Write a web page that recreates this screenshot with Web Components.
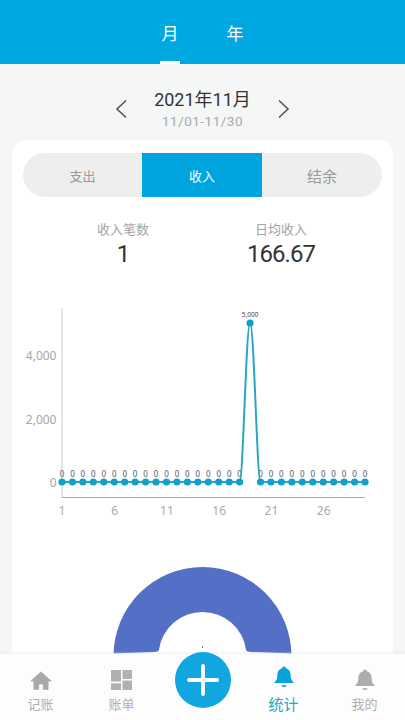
<!DOCTYPE html>
<html lang="zh">
<head>
<meta charset="utf-8">
<title>统计</title>
<style>
html,body{margin:0;padding:0;width:405px;height:720px;overflow:hidden;background:#f5f6f6;}
body{font-family:"Noto Sans CJK SC","Noto Sans",sans-serif;}
</style>
</head>
<body>
<stat-app>
    <app-header></app-header>
    <date-switch month="2021年11月" range="11/01-11/30"></date-switch>
    <stat-card>
        <seg-tabs></seg-tabs>
        <stat-summary></stat-summary>
        <line-chart></line-chart>
        <half-donut></half-donut>
    </stat-card>
    <bottom-nav slot="nav"></bottom-nav>
</stat-app>
<script>
class StatApp extends HTMLElement {
    constructor() {
        super();
        this.attachShadow({ mode: 'open' });
        this.shadowRoot.innerHTML = `
        <style>
            :host{display:flex;flex-direction:column;width:405px;height:720px;overflow:hidden;background:#f5f6f6;}
            .body{flex:1;min-height:0;overflow:hidden;display:flex;flex-direction:column;}
        </style>
        <div class="body"><slot></slot></div>
        <slot name="nav"></slot>
        `;
    }
}
class AppHeader extends HTMLElement {
    constructor() {
        super();
        this.attachShadow({ mode: 'open' });
        this.shadowRoot.innerHTML = `
        <style>
            :host{display:block;flex:none;height:64px;background:#00a8e2;color:#fff;}
            .tabs{display:flex;height:64px;padding-left:160px;gap:45px;box-sizing:border-box;}
            .tab{width:20px;display:flex;justify-content:center;align-items:flex-start;padding-top:21px;box-sizing:border-box;font-size:17px;line-height:24px;}
            .on{border-bottom:3px solid #fff;}
        </style>
        <div class="tabs">
            <div class="tab on">月</div>
            <div class="tab">年</div>
        </div>
        `;
    }
}
class DateSwitch extends HTMLElement {
    constructor() {
        super();
        this.attachShadow({ mode: 'open' });
    }
    connectedCallback() {
        this.shadowRoot.innerHTML = `
        <style>
            :host{display:flex;flex:none;height:76px;justify-content:center;align-items:center;gap:19.500px;}
            .mid{width:110px;text-align:center;padding-top:13px;}
            .m{font-family:Roboto,"Noto Sans CJK SC",sans-serif;font-size:18px;line-height:24px;color:#333;white-space:nowrap;}
            .r{font-family:Roboto,sans-serif;font-size:13.500px;line-height:16px;margin-top:1px;color:#aaa;letter-spacing:.5px;white-space:nowrap;}
            svg{display:block;margin-top:14px;}
        </style>
        <svg width="14" height="20" viewBox="0 0 14 20"><path d="M12 1.500 3 10l9 8.500" fill="none" stroke="#555" stroke-width="1.600"/></svg>
        <div class="mid">
            <div class="m">${this.getAttribute('month')}</div>
            <div class="r">${this.getAttribute('range')}</div>
        </div>
        <svg width="14" height="20" viewBox="0 0 14 20"><path d="M2 1.500 11 10l-9 8.500" fill="none" stroke="#555" stroke-width="1.600"/></svg>
        `;
    }
}
class StatCard extends HTMLElement {
    constructor() {
        super();
        this.attachShadow({ mode: 'open' });
        this.shadowRoot.innerHTML = `
        <style>
            :host{display:block;flex:1;min-height:0;margin:0 12px;padding:13px 11px 0;background:#fff;border-radius:14px 14px 0 0;box-sizing:border-box;overflow:hidden;}
        </style>
        <slot></slot>
        `;
    }
}
class SegTabs extends HTMLElement {
    constructor() {
        super();
        this.attachShadow({ mode: 'open' });
        this.shadowRoot.innerHTML = `
        <style>
            :host{display:grid;grid-template-columns:119px 120px 120px;height:44px;background:#eeeeee;border-radius:22px;overflow:hidden;}
            div{display:flex;align-items:center;justify-content:center;font-size:13px;color:#9a9a9a;}
            .on{background:#00a5df;color:#fff;}
            .big{font-size:15px;}
        </style>
        <div>支出</div>
        <div class="on">收入</div>
        <div class="big">结余</div>
        `;
    }
}
class StatSummary extends HTMLElement {
    constructor() {
        super();
        this.attachShadow({ mode: 'open' });
        this.shadowRoot.innerHTML = `
        <style>
            :host{display:grid;grid-template-columns:200px 116px;padding-top:22px;height:73px;box-sizing:border-box;}
            .c{text-align:center;}
            .l{font-size:13px;line-height:20px;color:#a4a4a4;white-space:nowrap;}
            .v{font-family:Roboto,sans-serif;font-size:24px;line-height:30px;color:#333;letter-spacing:-1px;white-space:nowrap;}
        </style>
        <div class="c"><div class="l">收入笔数</div><div class="v">1</div></div>
        <div class="c"><div class="l">日均收入</div><div class="v">166.67</div></div>
        `;
    }
}
class LineChart extends HTMLElement {
    constructor() {
        super();
        this.attachShadow({ mode: 'open' });
    }
    connectedCallback() {
        // x=0 of the svg is the card's content edge
        const ox = 39, y0 = 195, step = 303 / 29, top = 36;
        const xs = Array.from({ length: 30 }, (_, i) => ox + i * step);
        const peak = 18;
        let dots = '', labels = '', line = '';
        xs.forEach((x, i) => {
            const y = i === peak ? top : y0;
            if (i === peak) {
                labels += `<text x="${x}" y="${top - 6}" font-size="6.500" fill="#444" text-anchor="middle">5,000</text>`;
            } else {
                labels += `<text x="${x}" y="${y0 - 5}" font-size="8" fill="#555" text-anchor="middle">0</text>`;
            }
            dots += `<circle cx="${x}" cy="${y}" r="3.600" fill="#119fcb"/>`;
        });
        const a = xs[peak - 1], b = xs[peak], c = xs[peak + 1];
        line = `M${xs[0]} ${y0}L${a} ${y0}C${a + 3.5} ${y0} ${b - 4} ${top} ${b} ${top}C${b + 4} ${top} ${c - 3.5} ${y0} ${c} ${y0}L${xs[29]} ${y0}`;
        const ticks = [[1, 0], [6, 5], [11, 10], [16, 15], [21, 20], [26, 25]].map(([t, i]) =>
            `<text x="${xs[i] + (i ? 0.5 : 0)}" y="228" font-size="12" fill="#ababab" text-anchor="middle">${t}</text>`).join('');
        this.shadowRoot.innerHTML = `
        <style>
            :host{display:block;height:276px;padding-top:17px;}
            svg{display:block;font-family:"Noto Sans","Noto Sans CJK SC",sans-serif;}
        </style>
        <svg width="359" height="276" viewBox="0 0 359 276">
            <path d="M39 21V211" stroke="#d2d2d2" stroke-width="1.200" fill="none"/>
            <path d="M39 210.500H342" stroke="#a8a8a8" stroke-width="1" fill="none"/>
            <text x="33.500" y="72.500" font-size="12" fill="#a6a6a6" text-anchor="end">4,000</text>
            <text x="33.500" y="136.500" font-size="12" fill="#a6a6a6" text-anchor="end">2,000</text>
            <text x="33.500" y="200" font-size="12" fill="#a6a6a6" text-anchor="end">0</text>
            ${ticks}
            ${labels}
            <path d="${line}" fill="none" stroke="#2ba5c4" stroke-width="2"/>
            ${dots}
        </svg>
        `;
    }
}
class HalfDonut extends HTMLElement {
    constructor() {
        super();
        this.attachShadow({ mode: 'open' });
        this.shadowRoot.innerHTML = `
        <style>
            :host{display:block;height:91px;}
            svg{display:block;}
        </style>
        <svg width="359" height="91" viewBox="0 0 359 91">
            <path d="M90.500 93A89 89 0 0 1 268.500 93V90.500L228 89C224.500 89 223.500 88 223.100 87A44 44 0 0 0 135.900 87C135.500 88 134.500 89 131 89L90.500 90.500Z" fill="#5470c6"/>
            <path d="M179.500 83V85" stroke="#888" stroke-width="1"/>
        </svg>
        `;
    }
}
class BottomNav extends HTMLElement {
    constructor() {
        super();
        this.attachShadow({ mode: 'open' });
        const bell = c => `<svg width="20" height="24" viewBox="0 0 22 26"><path d="M11 1.500c1.300 0 2 .8 2 1.900 3.700 1 5.400 4 5.400 8 0 3.300.6 5.300 3 7.100v1.200H.6v-1.200c2.400-1.800 3-3.800 3-7.100 0-4 1.700-7 5.400-8C9 2.300 9.700 1.500 11 1.500z" fill="${c}"/><path d="M8 22h6c-.4 1.200-1.600 2-3 2s-2.600-.8-3-2z" fill="${c}"/></svg>`;
        this.shadowRoot.innerHTML = `
        <style>
            :host{display:grid;flex:none;position:relative;grid-template-columns:81px 81px 81px 81px 81px;height:66px;background:#fdfdfe;box-shadow:0 -1px 2px rgba(225,230,240,.7);}
            .item{display:flex;flex-direction:column;align-items:center;font-size:13px;line-height:18px;color:#b0b0b0;}
            .ic{height:41px;width:100%;display:flex;align-items:center;justify-content:center;padding-top:11px;box-sizing:border-box;}
            .on{color:#2aa5c2;font-size:15px;}
            .on .ic{padding-top:6px;padding-bottom:1px;}
            .plus{position:absolute;left:174.500px;top:-2px;width:56px;height:56px;border-radius:50%;background:#11a6e0;display:flex;align-items:center;justify-content:center;}
        </style>
        <div class="item"><div class="ic">
            <svg width="22" height="19" viewBox="0 0 22 19"><path d="M11 .8 .8 10h3V18.500h5V13h4.400v5.500h5V10h3z" fill="#a9a9a9" stroke="#a9a9a9" stroke-width=".6" stroke-linejoin="round"/></svg>
        </div>记账</div>
        <div class="item"><div class="ic">
            <svg width="21" height="20" viewBox="0 0 21 20" fill="#b0b0b0"><rect x="0" y="0" width="10" height="11.500"/><rect x="11.500" y="0" width="9.500" height="9"/><rect x="0" y="13.300" width="10" height="6.700"/><rect x="11.500" y="10.600" width="9.500" height="9.400"/></svg>
        </div>账单</div>
        <div class="item"></div>
        <div class="item on"><div class="ic">${bell('#07a4dc')}</div>统计</div>
        <div class="item"><div class="ic">${bell('#adadad')}</div>我的</div>
        <div class="plus"><svg width="32" height="32" viewBox="0 0 32 32"><path d="M2 16H30M16 2V30" stroke="#fff" stroke-width="3.800" stroke-linecap="round"/></svg></div>
        `;
    }
}
customElements.define('stat-app', StatApp);
customElements.define('app-header', AppHeader);
customElements.define('date-switch', DateSwitch);
customElements.define('stat-card', StatCard);
customElements.define('seg-tabs', SegTabs);
customElements.define('stat-summary', StatSummary);
customElements.define('line-chart', LineChart);
customElements.define('half-donut', HalfDonut);
customElements.define('bottom-nav', BottomNav);
</script>
</body>
</html>
